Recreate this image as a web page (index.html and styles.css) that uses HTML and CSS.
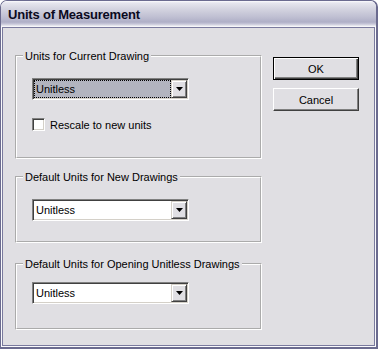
FILE: index.html
```html
<!DOCTYPE html>
<html lang="en">
<head>
  <meta charset="UTF-8" />
  <title>Units of Measurement</title>
  <link rel="stylesheet" href="styles.css">
</head>
<body>
  <div class="window">
    <div class="titlebar"><span class="title">Units of Measurement</span></div>

    <div class="client">
      <div class="groups">
        <fieldset class="group group_current">
          <legend>Units for Current Drawing</legend>
          <div class="combo focused">
            <span class="value">Unitless</span>
            <span class="drop"><svg width="7" height="4" viewBox="0 0 7 4"><polygon points="0,0 7,0 3.5,4" fill="#000"/></svg></span>
          </div>
          <label class="check"><span class="box"></span>Rescale to new units</label>
        </fieldset>

        <fieldset class="group group_new">
          <legend>Default Units for New Drawings</legend>
          <div class="combo">
            <span class="value">Unitless</span>
            <span class="drop"><svg width="7" height="4" viewBox="0 0 7 4"><polygon points="0,0 7,0 3.5,4" fill="#000"/></svg></span>
          </div>
        </fieldset>

        <fieldset class="group group_opening">
          <legend>Default Units for Opening Unitless Drawings</legend>
          <div class="combo">
            <span class="value">Unitless</span>
            <span class="drop"><svg width="7" height="4" viewBox="0 0 7 4"><polygon points="0,0 7,0 3.5,4" fill="#000"/></svg></span>
          </div>
        </fieldset>
      </div>

      <div class="buttons">
        <button class="btn btn_default">OK</button>
        <button class="btn">Cancel</button>
      </div>
    </div>
  </div>
</body>
</html>
```

FILE: styles.css
```css
body {
  margin: 0;
  background: #fff;
  font-family: "Liberation Sans", Arial, sans-serif;
  font-size: 11px;
  color: #000;
}
.window {
  width: 378px;
  height: 349px;
  box-sizing: border-box;
  border: 1px solid #6b6b8f;
  border-width: 1px 2px 2px 1px;
  border-radius: 7px 7px 0 0;
  background: #fafafc;
  padding: 0 1px 1px 1px;
  display: flex;
  flex-direction: column;
}
.titlebar {
  height: 26px;
  flex: none;
  margin: 0 -1px;
  padding-left: 7px;
  display: flex;
  align-items: center;
  border-radius: 6px 6px 0 0;
  background: linear-gradient(#fdfdfe 0, #e6e6ee 2px, #d4d4e0 8px, #bfbfd2 16px, #afafc7 21px, #c6c6d8 23px, #ededf3 25px, #fff 26px);
}
.title {
  font-size: 13px;
  font-weight: bold;
  color: #0a0a1e;
  letter-spacing: -0.2px;
}
.client {
  flex: 1;
  background: #e0dfe3;
  border: 1px solid #7a7a9e;
  display: flex;
  padding: 21px 0 0 12px;
}
.groups {
  width: 247px;
  display: flex;
  flex-direction: column;
}
.group {
  margin: 0;
  padding: 0 0 0 6px;
  border: 2px groove #fff;
  min-width: 0;
}
.group legend {
  padding: 0 2px;
  line-height: 14px;
}
.group_current {
  padding-bottom: 26px;
}
.group_current .combo {
  margin-top: 15px;
}
.group_new {
  margin-top: 11px;
  padding-bottom: 20px;
}
.group_new .combo {
  margin-top: 15px;
}
.group_opening {
  margin-top: 14px;
  padding-bottom: 24px;
}
.group_opening .combo {
  margin-top: 11px;
}
.combo {
  margin-left: 9px;
  width: 157px;
  height: 22px;
  box-sizing: border-box;
  border: 1px solid;
  border-color: #808080 #fff #fff #808080;
  box-shadow: inset 1px 1px #404040, inset -1px -1px #d4d0c8;
  background: #fff;
  padding: 1px;
  display: flex;
}
.value {
  flex: 1;
  padding-left: 2px;
  line-height: 18px;
}
.focused .value {
  background: #b2b4bf;
  outline: 1px dotted #000;
  outline-offset: -1px;
}
.drop {
  width: 16px;
  height: 18px;
  box-sizing: border-box;
  border: 1px solid;
  border-color: #d4d0c8 #404040 #404040 #d4d0c8;
  box-shadow: inset 1px 1px #fff, inset -1px -1px #808080;
  background: #e0dfe3;
  display: flex;
  align-items: center;
  justify-content: center;
}
.drop svg {
  display: block;
  margin-left: 1px;
}
.check {
  margin: 18px 0 0 9px;
  display: flex;
  align-items: center;
  gap: 5px;
  height: 13px;
}
.box {
  width: 13px;
  height: 13px;
  box-sizing: border-box;
  border: 1px solid;
  border-color: #808080 #fff #fff #808080;
  box-shadow: inset 1px 1px #404040, inset -1px -1px #d4d0c8;
  background: #fff;
}
.buttons {
  margin: 8px 0 0 11px;
  display: flex;
  flex-direction: column;
  gap: 8px;
}
.btn {
  width: 86px;
  height: 23px;
  padding: 0;
  font-family: inherit;
  font-size: 11px;
  color: #000;
  background: #e0dfe3;
  border: 1px solid;
  border-color: #fff #404040 #404040 #fff;
  box-shadow: inset -1px -1px #808080;
}
.btn_default {
  border-color: #000;
  box-shadow: inset 1px 1px #fff, inset -1px -1px #404040, inset -2px -2px #808080;
}
```
